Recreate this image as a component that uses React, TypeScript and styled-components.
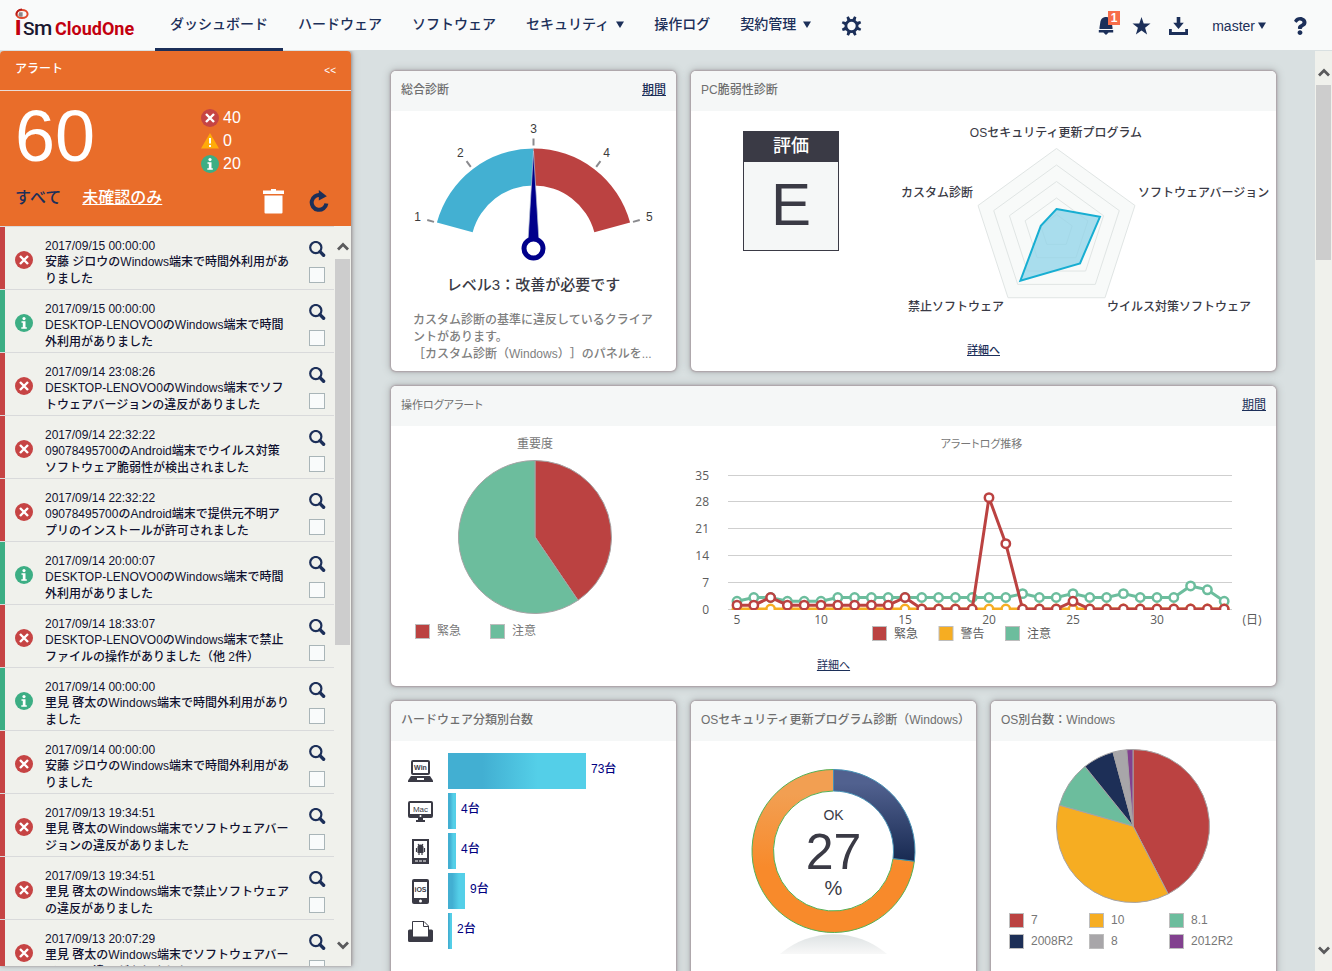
import React from 'react';
import styled, { createGlobalStyle, css } from 'styled-components';
import { FaQuestion } from 'react-icons/fa';

const color = {
  navy: '#1c2f59',
  page: '#d9e0e1',
  panel: '#f5f7f7',
  orange: '#e96d2a',
  red: '#c64444',
  chartRed: '#bb4241',
  green: '#3cae84',
  mint: '#6cbd9d',
  amber: '#f6ad22',
  grey: '#a8a6a9',
  purple: '#82418f',
  ink: '#3a3a45',
  muted: '#777777',
};

const GlobalStyle = createGlobalStyle`
  * { box-sizing: border-box; }
  body {
    margin: 0;
    background: ${color.page};
    color: ${color.ink};
    font-family: "Liberation Sans", "Noto Sans CJK JP", sans-serif;
    font-size: 12px;
    font-weight: 500;
    line-height: 16px;
    text-spacing-trim: space-all;
  }
  button {
    font: inherit;
    color: inherit;
    background: none;
    border: 0;
    padding: 0;
    cursor: pointer;
  }
  svg { display: block; }
  h2, h3, p, ul { margin: 0; padding: 0; font: inherit; }
  ul { list-style: none; }
`;

/* ---------- Page frame ---------- */

const Page = styled.div`
  display: flex;
  flex-direction: column;
  height: 100vh;
  overflow: hidden;
`;

const TopBar = styled.header`
  position: relative;
  z-index: 1;
  display: flex;
  flex: none;
  height: 51px;
  padding-right: 23px;
  background: #f9fafa;
  box-shadow: inset 0 -1px ${color.page};
  color: ${color.navy};
`;

const LogoLink = styled.a`
  width: 155px;
  padding: 8px 0 0 15px;
`;

const Nav = styled.nav`
  display: flex;
  flex: 1;
`;

const NavItem = styled.a<{ $active?: boolean }>`
  display: flex;
  align-items: center;
  gap: 7px;
  padding: 0 15px;
  border-bottom: 3px solid ${(p) => (p.$active ? color.navy : 'transparent')};
  color: inherit;
  font-size: 14px;
  line-height: 20px;
  text-decoration: none;
  white-space: nowrap;
`;

const SettingsItem = styled(NavItem)`
  padding-top: 4px;
`;

const Tools = styled.div`
  display: flex;
  align-items: center;
  gap: 18px;
`;

const ToolButton = styled.button`
  position: relative;
`;

const Badge = styled.span`
  position: absolute;
  top: -6px;
  right: -6px;
  width: 12px;
  height: 14px;
  background: #f76d4a;
  color: #fff;
  font-size: 12px;
  font-weight: 700;
  line-height: 14px;
`;

const UserButton = styled.button`
  display: flex;
  align-items: center;
  gap: 3px;
  margin: 0 7px 0 6px;
  font-size: 14px;
`;

const Body = styled.div`
  display: flex;
  flex: 1;
  min-height: 0;
`;

/* ---------- Scroll bar ---------- */

const Track = styled.div<{ $width: number; $top: number }>`
  display: flex;
  flex: none;
  flex-direction: column;
  align-items: center;
  width: ${(p) => p.$width}px;
  padding: ${(p) => p.$top}px 1px 16px;
  background: #f0f1ec;
`;

const Thumb = styled.div<{ $share: string }>`
  align-self: stretch;
  height: ${(p) => p.$share};
  margin: 8px 0 auto;
  background: #cdcdcd;
`;

/* ---------- Alerts panel ---------- */

const Aside = styled.aside`
  display: flex;
  flex: none;
  flex-direction: column;
  width: 351px;
  margin-bottom: 5px;
  border-radius: 4px 4px 0 0;
  box-shadow: 1px 0 3px #9b9597, 2px 0 7px #b9bcbd;
  background: #f0f1ec;
`;

const AsideHead = styled.div`
  display: flex;
  align-items: center;
  justify-content: space-between;
  height: 40px;
  padding: 0 15px 4px;
  border-bottom: 1px solid #e9dcd8;
  border-radius: 4px 4px 0 0;
  background: ${color.orange};
  color: #fff;
`;

const Collapse = styled.button`
  padding-top: 4px;
  font-size: 10px;
`;

const Summary = styled.div`
  height: 135px;
  padding: 9px 15px 0;
  background: ${color.orange};
  color: #fff;
`;

const Totals = styled.div`
  display: flex;
`;

const Total = styled.p`
  width: 186px;
  font-size: 72px;
  line-height: 72px;
`;

const Counts = styled.ul`
  display: grid;
  gap: 1px;
  padding-top: 7px;
`;

const Count = styled.li`
  display: flex;
  align-items: center;
  gap: 4px;
  height: 22px;
  font-size: 16px;
`;

const Filters = styled.div`
  display: flex;
  align-items: center;
  gap: 21px;
  height: 32px;
  margin-top: 7px;
  font-size: 16px;
  line-height: 24px;
`;

const Filter = styled.a<{ $current?: boolean }>`
  color: ${(p) => (p.$current ? color.navy : '#fff')};
  text-decoration: ${(p) => (p.$current ? 'none' : 'underline')};
`;

const Actions = styled.div`
  display: flex;
  align-items: center;
  gap: 25px;
  margin-left: auto;
  padding: 6px 7px 0 0;
`;

const ListArea = styled.div`
  display: flex;
  flex: 1;
  min-height: 0;
`;

const AlertList = styled.ul`
  flex: 1;
  overflow: hidden;
`;

const AlertRow = styled.li<{ $tone: string }>`
  display: flex;
  height: 63px;
  padding: 0 8px 0 10px;
  border-top: 1px solid #d9dadb;
  box-shadow: inset 5px 0 ${(p) => p.$tone};
  color: #101230;
  > svg {
    align-self: center;
    margin: 4px 12px 0 5px;
  }
`;

const AlertText = styled.div`
  width: 244px;
  padding-top: 11px;
  line-height: 17px;
  time { display: block; line-height: 16px; }
`;

const AlertTools = styled.div`
  display: flex;
  flex-direction: column;
  gap: 9px;
  margin-left: auto;
  padding-top: 14px;
`;

const Check = styled.input`
  appearance: none;
  width: 16px;
  height: 16px;
  margin: 0;
  border: 1px solid #a9b5b8;
  background: #f9fbfb;
`;

/* ---------- Cards ---------- */

const Main = styled.main`
  flex: 1;
  min-width: 0;
  overflow: hidden;
  padding: 20px 39px 20px 40px;
`;

const Grid = styled.div`
  display: grid;
  grid-template-columns: repeat(3, minmax(285px, 1fr));
  gap: 15px;
`;

const CardHead = styled.div`
  display: flex;
  align-items: center;
  justify-content: space-between;
  height: 40px;
  padding: 0 10px 2px;
  border-radius: 5px 5px 0 0;
  background: ${color.panel};
  color: #6f6f6f;
  white-space: nowrap;
`;

const CardBox = styled.section<{ $span: number; $compact?: boolean }>`
  display: flex;
  flex-direction: column;
  grid-column: span ${(p) => p.$span};
  min-height: 300px;
  border-radius: 5px;
  background: #fff;
  box-shadow: 0 0 2px 1px #a89da2, 0 0 7px 2px #b6bbbc;
  ${(p) =>
    p.$compact &&
    css`
      font-family: "Open Sans", "Noto Sans CJK JP", sans-serif;
      font-weight: 400;
      font-feature-settings: "palt";
      ${CardHead} h2 { font-size: 11px; }
    `}
`;

const TextLink = styled.a<{ $small?: boolean }>`
  color: ${color.navy};
  font-size: ${(p) => (p.$small ? 11 : 12)}px;
`;

const CardFoot = styled.div`
  margin-top: auto;
  padding-bottom: 13px;
  text-align: center;
`;

const Centered = styled.div`
  display: flex;
  flex-direction: column;
  align-items: center;
`;

const GaugeWrap = styled(Centered)`
  padding-top: 10px;
`;

const Verdict = styled.p`
  padding-top: 13px;
  font-size: 15px;
  line-height: 20px;
`;

const Advice = styled.p`
  width: 241px;
  padding-top: 17px;
  color: #808080;
  line-height: 17px;
  white-space: nowrap;
`;

const RatingRow = styled.div`
  display: flex;
  align-items: flex-start;
  gap: 62px;
  padding: 10px 0 0 52px;
`;

const Rating = styled.div`
  width: 96px;
  margin-top: 10px;
  border: 1px solid ${color.ink};
  background: ${color.panel};
  text-align: center;
`;

const RatingLabel = styled.h3`
  height: 30px;
  background: ${color.ink};
  color: #fff;
  font-size: 18px;
  line-height: 28px;
`;

const RatingGrade = styled.p`
  height: 88px;
  font-size: 60px;
  line-height: 86px;
`;

const LogRow = styled.div`
  display: flex;
  color: ${color.muted};
`;

const LogPie = styled(Centered)`
  width: 288px;
  padding-top: 10px;
`;

const LogTrend = styled(Centered)`
  flex: 1;
  padding: 10px 0 0 8px;
  > h3 { font-size: 11px; }
  > svg { margin-top: 13px; }
`;

const PieWrap = styled.div`
  padding-top: 8px;
`;

const LogLegend = styled.ul`
  display: flex;
  align-self: flex-start;
  gap: 29px;
  padding: 8px 0 0 24px;
`;

const LegendItem = styled.li`
  display: flex;
  align-items: center;
  gap: 7px;
  white-space: nowrap;
`;

const Swatch = styled.span<{ $color: string }>`
  width: 15px;
  height: 15px;
  border: 1px solid #bdbdbd;
  background: ${(p) => p.$color};
`;

const DeviceList = styled.ul`
  display: grid;
  gap: 4px;
  padding: 12px 0 0 17px;
`;

const Device = styled.li`
  display: flex;
  height: 36px;
  color: #000080;
`;

const DeviceIcon = styled.span`
  display: flex;
  align-items: center;
  width: 40px;
`;

const Bar = styled.span`
  height: 36px;
  margin-right: 5px;
  background: linear-gradient(90deg, #42afd2 25%, #54cfe8 65%);
`;

const DeviceCount = styled.span`
  padding-top: 8px;
`;

const DonutWrap = styled(Centered)`
  padding-top: 28px;
`;

const OsLegend = styled.ul`
  display: grid;
  grid-template-columns: repeat(3, 80px);
  gap: 5px 0;
  padding: 8px 0 0 18px;
  color: ${color.muted};
`;

/* ---------- Icons ---------- */

const Logo = () => (
  <svg width="124" height="34" viewBox="0 0 124 34" role="img" aria-label="ISM CloudOne">
    <ellipse cx="7" cy="6" rx="5.6" ry="4" fill="none" stroke="#e0492c" strokeWidth="2" />
    <path d="M1.6 7.6C.8 4 3.6 1.4 7 1.4" fill="none" stroke="#b51a1a" strokeWidth="1.6" />
    <path d="M4.2 4.2h3.4v4.4c-2 .6-3.6-.2-4.2-1.4z" fill="#8d8585" />
    <text x="0" y="27" fontFamily="Roboto" fontWeight="900" fontSize="21" fill="#c3000f">I</text>
    <text x="8" y="27" fontFamily="Roboto" fontWeight="500" fontSize="19" fill="#1b1730">S</text>
    <text x="19" y="27" fontFamily="Roboto" fontWeight="500" fontSize="21" fill="#1b1730">m</text>
    <text x="40" y="27" fontFamily="Roboto" fontWeight="700" fontSize="18" fill="#c3000f">CloudOne</text>
  </svg>
);

const Caret = () => (
  <svg width="8" height="7" viewBox="0 0 8 7" aria-hidden="true">
    <path d="M0 .5h8L4 7z" fill="currentColor" />
  </svg>
);

const GearIcon = () => (
  <svg width="21" height="20" viewBox="0 0 20 20" aria-hidden="true">
    {[0, 45, 90, 135, 180, 225, 270, 315].map((a) => (
      <path key={a} d="M8.2 4.2L8.8 0h2.4l.6 4.2z" fill="currentColor" transform={`rotate(${a + 22} 10 10)`} />
    ))}
    <circle cx="10" cy="10" r="5.6" fill="none" stroke="currentColor" strokeWidth="2.8" />
  </svg>
);

const BellIcon = () => (
  <svg width="16" height="18" viewBox="0 0 16 18" aria-hidden="true">
    <path d="M7 0h2c3 .6 4.7 3 4.8 6l.7 4.5V12h-13v-1.5L2.2 6C2.3 3 4 .6 7 0z" fill="currentColor" />
    <path d="M.8 13h14.4v2.4H10.6L8 18l-2.6-2.6H.8z" fill="currentColor" />
  </svg>
);

const StarIcon = () => (
  <svg width="19" height="18" viewBox="0 0 18 18" aria-hidden="true">
    <path d="M9 0l2.2 6.5H18l-5.4 4.3 2 6.7L9 13.500l-5.600 4 2-6.700L0 6.500h6.800z" fill="currentColor" />
  </svg>
);

const DownloadIcon = () => (
  <svg width="19" height="18" viewBox="0 0 19 18" aria-hidden="true">
    <path d="M7.700 0h3.600v5.800h3.500L9.500 12 4.200 5.800h3.500z" fill="currentColor" />
    <path d="M0 12h2.800v3h13.400v-3H19v6H0z" fill="currentColor" />
  </svg>
);

const TrashIcon = () => (
  <svg width="21" height="25" viewBox="0 0 21 25" aria-hidden="true">
    <path d="M0 1.500h8V0h5v1.500h8V5H0z" fill="#fff" />
    <path d="M1.500 6.500h18v17a1 1 0 0 1-1 1h-16a1 1 0 0 1-1-1z" fill="#fff" />
  </svg>
);

const RefreshIcon = () => (
  <svg width="20" height="22" viewBox="0 0 20 22" aria-hidden="true">
    <path d="M11.500 5.200A7.400 7.400 0 1 0 17.400 13.500" fill="none" stroke={color.navy} strokeWidth="4" />
    <path d="M9.800 0l8 6.200-8 4.300z" fill={color.navy} />
  </svg>
);

const SearchIcon = () => (
  <svg width="17" height="17" viewBox="0 0 17 17" aria-hidden="true">
    <circle cx="6.800" cy="6.600" r="5.600" fill="none" stroke={color.navy} strokeWidth="2.200" />
    <path d="M11 10.600l3.600 3.600" stroke={color.navy} strokeWidth="3.400" strokeLinecap="round" />
  </svg>
);

type Level = 'error' | 'warn' | 'info';

const LevelIcon = ({ level }: { level: Level }) => (
  <svg width="18" height="18" viewBox="0 0 18 18" aria-hidden="true">
    {level === 'error' && (
      <>
        <circle cx="9" cy="9" r="9" fill={color.red} />
        <path d="M5 5l8 8M13 5l-8 8" stroke="#fff" strokeWidth="2.400" />
      </>
    )}
    {level === 'warn' && (
      <>
        <path d="M9 1l9 15.500H0z" fill="#ffab0a" />
        <path d="M9 6v5.500M9 13v2" stroke="#fff" strokeWidth="2" />
      </>
    )}
    {level === 'info' && (
      <>
        <circle cx="9" cy="9" r="9" fill={color.green} />
        <circle cx="9" cy="4.600" r="1.600" fill="#fff" />
        <path d="M6.500 7.200h4v6h1.300v1.500H6.300v-1.500h1.500V8.700H6.500z" fill="#fff" />
      </>
    )}
  </svg>
);

const Chevron = ({ down }: { down?: boolean }) => (
  <svg width="12" height="9" viewBox="0 0 12 9" aria-hidden="true">
    <path d={down ? 'M1 1.500l5 5 5-5' : 'M1 7.500l5-5 5 5'} fill="none" stroke="#5a5a5c" strokeWidth="2.800" />
  </svg>
);

const ScrollBar = ({ width, top, share }: { width: number; top: number; share: string }) => (
  <Track $width={width} $top={top} aria-hidden="true">
    <Chevron />
    <Thumb $share={share} />
    <Chevron down />
  </Track>
);

const tiny = { fontSize: 8, fill: color.ink, textAnchor: 'middle' as const };

const deviceIcons: Record<string, React.ReactNode> = {
  win: (
    <svg width="25" height="22" viewBox="0 0 25 22" role="img" aria-label="Windows">
      <rect x="4" y="1" width="17" height="13" rx="1" fill="#fff" stroke={color.ink} strokeWidth="2" />
      <path d="M3 16h19l3 4.500V22H0v-1.500z" fill={color.ink} />
      <rect x="9" y="18" width="7" height="2" fill="#fff" />
      <text x="12.500" y="10" {...tiny} fontSize={7} fontWeight="700">Win</text>
    </svg>
  ),
  mac: (
    <svg width="25" height="22" viewBox="0 0 25 22" role="img" aria-label="Mac">
      <rect x="0" y="1" width="25" height="17" rx="2" fill={color.ink} />
      <rect x="2" y="3" width="21" height="11" fill="#fff" />
      <circle cx="12.500" cy="16" r="1" fill="#fff" />
      <path d="M10 18h5v2h2v2H8v-2h2z" fill={color.ink} />
      <text x="12.500" y="11.500" {...tiny}>Mac</text>
    </svg>
  ),
  android: (
    <svg width="25" height="26" viewBox="0 0 25 26" role="img" aria-label="Android">
      <rect x="4" y="1" width="17" height="25" fill={color.ink} />
      <rect x="6" y="3" width="13" height="17" fill="#fff" />
      <path d="M7 23h3M11 23h3M15 23h3" stroke="#fff" />
      <path d="M10 6l1.200 1.500M15 6l-1.200 1.500M8.500 10v4M16.500 10v4M11 14v3M14 14v3" stroke={color.ink} strokeWidth="1.200" />
      <path d="M9.500 9.500a3 3 0 0 1 6 0V15h-6z" fill={color.ink} />
    </svg>
  ),
  ios: (
    <svg width="25" height="26" viewBox="0 0 25 26" role="img" aria-label="iOS">
      <rect x="4" y="1" width="17" height="25" rx="2" fill={color.ink} />
      <rect x="6" y="4" width="13" height="16" fill="#fff" />
      <circle cx="12.500" cy="23" r="1.500" fill="#fff" />
      <text x="12.500" y="14" {...tiny} fontSize={7} fontWeight="700">iOS</text>
    </svg>
  ),
  printer: (
    <svg width="25" height="22" viewBox="0 0 25 22" role="img" aria-label="Printer">
      <path d="M0 11a1.500 1.500 0 0 1 1.500-1.500h22A1.500 1.500 0 0 1 25 11v9.500a1.500 1.500 0 0 1-1.500 1.500h-22A1.500 1.500 0 0 1 0 20.500z" fill={color.ink} />
      <path d="M4.500 17V1.500H16L20.500 6v11z" fill="#fff" stroke={color.ink} />
      <path d="M15.500 1.500V6.500h5" fill="none" stroke={color.ink} />
    </svg>
  ),
};

/* ---------- Charts ---------- */

const polar = (cx: number, cy: number, r: number, deg: number): [number, number] => {
  const a = ((deg - 90) * Math.PI) / 180;
  return [cx + r * Math.cos(a), cy + r * Math.sin(a)];
};

const ring = (cx: number, cy: number, outer: number, inner: number, from: number, to: number) => {
  const large = to - from > 180 ? 1 : 0;
  const [a, b, c, d] = [
    polar(cx, cy, outer, from),
    polar(cx, cy, outer, to),
    polar(cx, cy, inner, to),
    polar(cx, cy, inner, from),
  ];
  return `M${a}A${outer} ${outer} 0 ${large} 1 ${b}L${c}A${inner} ${inner} 0 ${large} 0 ${d}Z`;
};

type Slice = { value: number; fill: string };

const Pie = ({ slices, label }: { slices: Slice[]; label: string }) => {
  const total = slices.reduce((sum, s) => sum + s.value, 0);
  let angle = 0;
  return (
    <svg width="155" height="155" viewBox="0 0 155 155" role="img" aria-label={label}>
      {slices.map((s) => {
        const from = angle;
        angle += (s.value / total) * 360;
        const start = polar(77, 77, 76.5, from);
        const end = polar(77, 77, 76.5, angle);
        return (
          <path
            key={s.fill}
            d={`M77 77L${start}A76.5 76.5 0 ${angle - from > 180 ? 1 : 0} 1 ${end}Z`}
            fill={s.fill}
            stroke="#a5a3a4"
          />
        );
      })}
    </svg>
  );
};

const Gauge = () => (
  <svg width="241" height="141" viewBox="0 0 241 141" role="img" aria-label="レベル3">
    <path d={ring(120.5, 127.5, 100, 63, -75, 0)} fill="#43b0d2" />
    <path d={ring(120.5, 127.5, 100, 63, 0, 75)} fill={color.chartRed} />
    {[1, 2, 3, 4, 5].map((n) => {
      const deg = (n - 3) * 37.5;
      const [x1, y1] = polar(120.5, 127.5, 103, deg);
      const [x2, y2] = polar(120.5, 127.5, 110, deg);
      const [tx, ty] = polar(120.5, 127.5, 120, deg);
      return (
        <g key={n}>
          <path d={`M${x1} ${y1}L${x2} ${y2}`} stroke="#8a8a8e" strokeWidth="2" />
          <text x={tx} y={ty + 4} fontSize="12" textAnchor="middle" fill="#3c3c3c">{n}</text>
        </g>
      );
    })}
    <path d="M120.500 30l5.500 90h-11z" fill="#00008b" stroke="#b9c4d6" strokeWidth="0.700" />
    <circle cx="120.500" cy="127.500" r="9.500" fill="#fff" stroke="#00008b" strokeWidth="5" />
  </svg>
);

const Radar = () => {
  const values = [22, 45.7, 40, 61.5, 16.5];
  const shape = (r: (i: number) => number) =>
    [0, 1, 2, 3, 4].map((i) => polar(155.5, 110, r(i), i * 72).join(',')).join(' ');
  return (
    <svg width="372" height="200" viewBox="0 0 372 200" role="img" aria-label="PC脆弱性診断" fill={color.ink} fontSize="12">
      {[82.5, 66, 49.5, 33, 16.5].map((r) => (
        <polygon key={r} points={shape(() => r)} fill="#f8faf9" stroke="#e0e5e4" />
      ))}
      <polygon points={shape((i) => values[i])} fill="#8fd3e8" fillOpacity="0.75" stroke="#17aed2" strokeWidth="2" />
      <text x="155" y="16" textAnchor="middle">OSセキュリティ更新プログラム</text>
      <text x="237" y="76">ソフトウェアバージョン</text>
      <text x="206" y="190">ウイルス対策ソフトウェア</text>
      <text x="103" y="190" textAnchor="end">禁止ソフトウェア</text>
      <text x="72" y="76" textAnchor="end">カスタム診断</text>
    </svg>
  );
};

const series = [
  {
    name: '注意',
    stroke: color.mint,
    values: [2, 3, 3, 2, 2, 2, 3, 3, 3, 3, 3, 3, 3, 3, 3, 3, 3, 4, 3, 3, 4, 3, 3, 4, 3, 3, 3, 6, 5, 2],
  },
  { name: '警告', stroke: color.amber, values: Array<number>(30).fill(0) },
  {
    name: '緊急',
    stroke: color.chartRed,
    values: [1, 1, 3, 1, 1, 1, 1, 1, 1, 1, 3, 0, 0, 0, 0, 29, 17, 0, 0, 0, 2, 0, 0, 0, 0, 0, 0, 0, 0, 0],
  },
];

const TrendChart = () => {
  const px = (i: number) => 43 + i * 16.8;
  const py = (v: number) => 144 - v * 3.84;
  const legend = [series[2], series[1], series[0]];
  return (
    <svg width="576" height="180" viewBox="0 0 576 180" role="img" aria-label="アラートログ推移" fontSize="12" fill="#5c5c5c">
      <clipPath id="plot"><rect x="30" y="0" width="510" height="145" /></clipPath>
      {[35, 28, 21, 14, 7, 0].map((v) => (
        <g key={v}>
          <path d={`M34 ${Math.round(py(v)) + 0.5}H538`} stroke="#cfcfcf" />
          <text x="15" y={py(v) + 5} textAnchor="end">{v}</text>
        </g>
      ))}
      <g clipPath="url(#plot)">
        {series.map((s) => (
          <g key={s.name} fill="#fff" stroke={s.stroke} strokeWidth="2.500">
            <polyline fill="none" strokeWidth="3" points={s.values.map((v, i) => `${px(i)},${py(v)}`).join(' ')} />
            {s.values.map((v, i) => (
              <circle key={i} cx={px(i)} cy={py(v)} r="4.200" />
            ))}
          </g>
        ))}
      </g>
      {[5, 10, 15, 20, 25, 30].map((d) => (
        <text key={d} x={px(d - 5)} y="159" textAnchor="middle">{d}</text>
      ))}
      <text x="558" y="159" textAnchor="middle">(日)</text>
      {legend.map((s, i) => (
        <g key={s.name}>
          <rect x={178.5 + i * 66.5} y="161.500" width="14" height="14" fill={s.stroke} stroke="#bdbdbd" />
          <text x={200 + i * 66.5} y="173">{s.name}</text>
        </g>
      ))}
    </svg>
  );
};

const Donut = () => (
  <svg width="165" height="190" viewBox="0 0 165 190" role="img" aria-label="OK 27%" fill={color.ink} textAnchor="middle">
    <defs>
      <linearGradient id="ng" x1="0" y1="0" x2="0" y2="1">
        <stop offset="0.150" stopColor="#f29f52" />
        <stop offset="0.600" stopColor="#f88a2b" />
      </linearGradient>
      <linearGradient id="ok" x1="0" y1="0" x2="0" y2="1">
        <stop offset="0.150" stopColor="#51618f" />
        <stop offset="1" stopColor="#182a52" />
      </linearGradient>
      <linearGradient id="mirror" x1="0" y1="0" x2="0" y2="1">
        <stop offset="0" stopColor="#dde2e3" />
        <stop offset="1" stopColor="#f8f8f8" />
      </linearGradient>
    </defs>
    <path d={ring(82.5, 82, 81.5, 60, 97.2, 360)} fill="url(#ng)" stroke="#55b055" />
    <path d={ring(82.5, 82, 81.5, 60, 0, 97.2)} fill="url(#ok)" stroke="#4790b5" />
    <path d="M29 185A82 82 0 0 1 136 185z" fill="url(#mirror)" />
    <text x="82.500" y="51" fontSize="14">OK</text>
    <text x="82.500" y="100" fontSize="50">27</text>
    <text x="82.500" y="126" fontSize="20">%</text>
  </svg>
);

/* ---------- Data ---------- */

const navItems = [
  { label: 'ダッシュボード', active: true },
  { label: 'ハードウェア' },
  { label: 'ソフトウェア' },
  { label: 'セキュリティ', menu: true },
  { label: '操作ログ' },
  { label: '契約管理', menu: true },
];

const alerts: { level: Level; time: string; text: string }[] = [
  { level: 'error', time: '2017/09/15 00:00:00', text: '安藤 ジロウのWindows端末で時間外利用がありました' },
  { level: 'info', time: '2017/09/15 00:00:00', text: 'DESKTOP-LENOVO0のWindows端末で時間外利用がありました' },
  { level: 'error', time: '2017/09/14 23:08:26', text: 'DESKTOP-LENOVO0のWindows端末でソフトウェアバージョンの違反がありました' },
  { level: 'error', time: '2017/09/14 22:32:22', text: '09078495700のAndroid端末でウイルス対策ソフトウェア脆弱性が検出されました' },
  { level: 'error', time: '2017/09/14 22:32:22', text: '09078495700のAndroid端末で提供元不明アプリのインストールが許可されました' },
  { level: 'info', time: '2017/09/14 20:00:07', text: 'DESKTOP-LENOVO0のWindows端末で時間外利用がありました' },
  { level: 'error', time: '2017/09/14 18:33:07', text: 'DESKTOP-LENOVO0のWindows端末で禁止ファイルの操作がありました（他 2件）' },
  { level: 'info', time: '2017/09/14 00:00:00', text: '里見 啓太のWindows端末で時間外利用がありました' },
  { level: 'error', time: '2017/09/14 00:00:00', text: '安藤 ジロウのWindows端末で時間外利用がありました' },
  { level: 'error', time: '2017/09/13 19:34:51', text: '里見 啓太のWindows端末でソフトウェアバージョンの違反がありました' },
  { level: 'error', time: '2017/09/13 19:34:51', text: '里見 啓太のWindows端末で禁止ソフトウェアの違反がありました' },
  { level: 'error', time: '2017/09/13 20:07:29', text: '里見 啓太のWindows端末でソフトウェアバージョンの違反がありました' },
];

const devices = [
  { icon: 'win', count: 73, width: 138 },
  { icon: 'mac', count: 4, width: 8 },
  { icon: 'android', count: 4, width: 8 },
  { icon: 'ios', count: 9, width: 17 },
  { icon: 'printer', count: 2, width: 4 },
];

const osSlices = [
  { name: '7', value: 42.4, fill: color.chartRed },
  { name: '10', value: 37, fill: color.amber },
  { name: '8.1', value: 9.8, fill: color.mint },
  { name: '2008R2', value: 6.6, fill: '#1d2f57' },
  { name: '8', value: 2.9, fill: color.grey },
  { name: '2012R2', value: 1.3, fill: color.purple },
];

const importance = [
  { name: '緊急', value: 40.5, fill: color.chartRed },
  { name: '注意', value: 59.5, fill: color.mint },
];

/* ---------- Sections ---------- */

type CardProps = {
  title: string;
  span?: number;
  period?: boolean;
  compact?: boolean;
  children: React.ReactNode;
};

const Card = ({ title, span = 1, period, compact, children }: CardProps) => (
  <CardBox $span={span} $compact={compact}>
    <CardHead>
      <h2>{title}</h2>
      {period && <TextLink href="#period">期間</TextLink>}
    </CardHead>
    {children}
  </CardBox>
);

const Header = () => (
  <TopBar>
    <LogoLink href="#top"><Logo /></LogoLink>
    <Nav>
      {navItems.map((item) => (
        <NavItem key={item.label} href="#nav" $active={item.active}>
          {item.label}
          {item.menu && <Caret />}
        </NavItem>
      ))}
      <SettingsItem href="#settings" aria-label="設定"><GearIcon /></SettingsItem>
    </Nav>
    <Tools>
      <ToolButton aria-label="通知"><BellIcon /><Badge>1</Badge></ToolButton>
      <ToolButton aria-label="お気に入り"><StarIcon /></ToolButton>
      <ToolButton aria-label="ダウンロード"><DownloadIcon /></ToolButton>
      <UserButton>master<Caret /></UserButton>
      <ToolButton aria-label="ヘルプ"><FaQuestion size={18} /></ToolButton>
    </Tools>
  </TopBar>
);

const AlertsPanel = () => (
  <Aside>
    <AsideHead>
      <h2>アラート</h2>
      <Collapse>&lt;&lt;</Collapse>
    </AsideHead>
    <Summary>
      <Totals>
        <Total>60</Total>
        <Counts>
          <Count><LevelIcon level="error" />40</Count>
          <Count><LevelIcon level="warn" />0</Count>
          <Count><LevelIcon level="info" />20</Count>
        </Counts>
      </Totals>
      <Filters>
        <Filter href="#all" $current>すべて</Filter>
        <Filter href="#unread">未確認のみ</Filter>
        <Actions>
          <button aria-label="削除"><TrashIcon /></button>
          <button aria-label="更新"><RefreshIcon /></button>
        </Actions>
      </Filters>
    </Summary>
    <ListArea>
      <AlertList>
        {alerts.map((alert, i) => (
          <AlertRow key={i} $tone={alert.level === 'info' ? color.green : color.red}>
            <LevelIcon level={alert.level} />
            <AlertText>
              <time>{alert.time}</time>
              <p>{alert.text}</p>
            </AlertText>
            <AlertTools>
              <button aria-label="詳細"><SearchIcon /></button>
              <Check type="checkbox" aria-label={`${alert.time} を選択`} />
            </AlertTools>
          </AlertRow>
        ))}
      </AlertList>
      <ScrollBar width={17} top={16} share="386px" />
    </ListArea>
  </Aside>
);

export default function App() {
  return (
    <Page lang="ja">
      <GlobalStyle />
      <Header />
      <Body>
        <AlertsPanel />
        <Main>
          <Grid>
            <Card title="総合診断" period>
              <GaugeWrap>
                <Gauge />
                <Verdict>レベル3：改善が必要です</Verdict>
                <Advice>
                  カスタム診断の基準に違反しているクライア<br />
                  ントがあります。<br />
                  ［カスタム診断（Windows）］のパネルを...
                </Advice>
              </GaugeWrap>
            </Card>
            <Card title="PC脆弱性診断" span={2}>
              <RatingRow>
                <Rating>
                  <RatingLabel>評価</RatingLabel>
                  <RatingGrade>E</RatingGrade>
                </Rating>
                <Radar />
              </RatingRow>
              <CardFoot><TextLink href="#detail" $small>詳細へ</TextLink></CardFoot>
            </Card>
            <Card title="操作ログアラート" span={3} period compact>
              <LogRow>
                <LogPie>
                  <h3>重要度</h3>
                  <PieWrap><Pie slices={importance} label="重要度" /></PieWrap>
                  <LogLegend>
                    {importance.map((s) => (
                      <LegendItem key={s.name}><Swatch $color={s.fill} />{s.name}</LegendItem>
                    ))}
                  </LogLegend>
                </LogPie>
                <LogTrend>
                  <h3>アラートログ推移</h3>
                  <TrendChart />
                </LogTrend>
              </LogRow>
              <CardFoot><TextLink href="#detail" $small>詳細へ</TextLink></CardFoot>
            </Card>
            <Card title="ハードウェア分類別台数">
              <DeviceList>
                {devices.map((d) => (
                  <Device key={d.icon}>
                    <DeviceIcon>{deviceIcons[d.icon]}</DeviceIcon>
                    <Bar style={{ width: d.width }} />
                    <DeviceCount>{d.count}台</DeviceCount>
                  </Device>
                ))}
              </DeviceList>
            </Card>
            <Card title="OSセキュリティ更新プログラム診断（Windows）">
              <DonutWrap><Donut /></DonutWrap>
            </Card>
            <Card title="OS別台数：Windows">
              <Centered>
                <PieWrap><Pie slices={osSlices} label="OS別台数" /></PieWrap>
              </Centered>
              <OsLegend>
                {osSlices.map((s) => (
                  <LegendItem key={s.name}><Swatch $color={s.fill} />{s.name}</LegendItem>
                ))}
              </OsLegend>
            </Card>
          </Grid>
        </Main>
        <ScrollBar width={17} top={17} share="175px" />
      </Body>
    </Page>
  );
}
